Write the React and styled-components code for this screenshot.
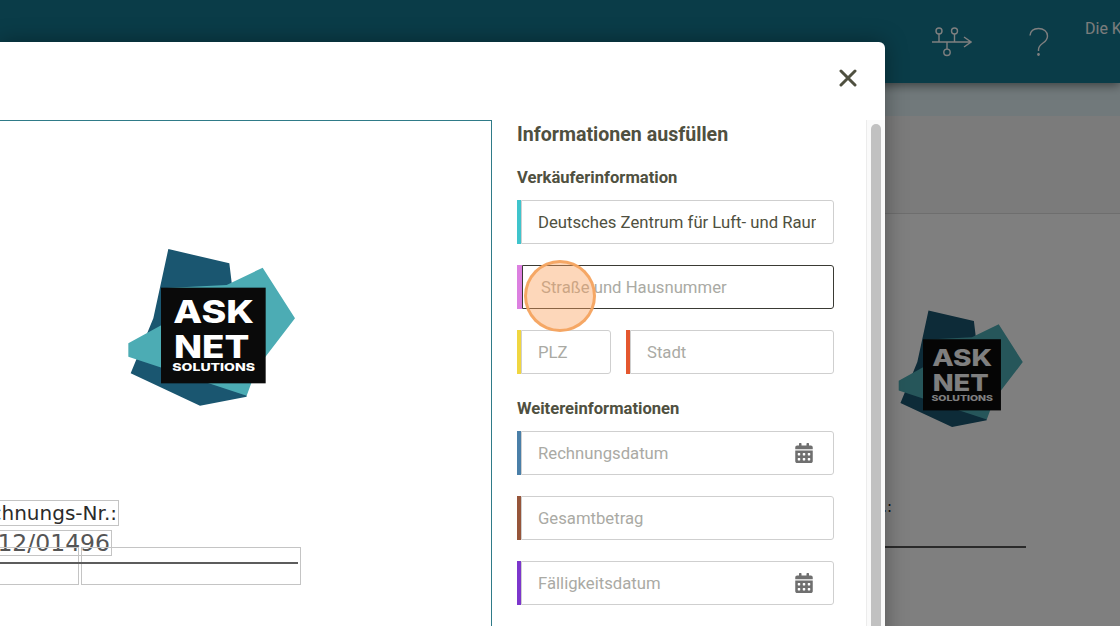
import React from "react";
import styled, { createGlobalStyle } from "styled-components";
import { FaCalendarAlt } from "react-icons/fa";

const GlobalStyle = createGlobalStyle`
  html, body {
    margin: 0;
    padding: 0;
    height: 100%;
    overflow: hidden;
    font-family: Roboto, "Liberation Sans", sans-serif;
  }
  * {
    box-sizing: border-box;
  }
`;

const Screen = styled.div`
  position: relative;
  width: 1120px;
  height: 626px;
  overflow: hidden;
  background: #fff;
`;

const Header = styled.header`
  position: relative;
  height: 83px;
  display: flex;
  justify-content: flex-end;
  background: #147890;
  box-shadow: 0 2px 10px rgba(0, 0, 0, 0.5);
  color: #fff;
`;

const WorkflowIcon = styled.svg`
  width: 40px;
  height: 32px;
  margin-top: 26px;
  margin-right: 57px;
`;

const HelpIcon = styled.svg`
  width: 20px;
  height: 30px;
  margin-top: 27px;
  margin-right: 36px;
`;

const UserName = styled.div`
  width: 35px;
  padding-top: 20px;
  overflow: hidden;
  white-space: nowrap;
  font-size: 16px;
  line-height: 18px;
  font-weight: 400;
  color: #f6f8f8;
`;

const SubBar = styled.div`
  height: 33px;
  background: #e2f2f6;
`;

const Toolbar = styled.div`
  height: 98px;
  background: #f6f6f6;
  border-bottom: 1px solid #dcdcdc;
`;

const PageBody = styled.div`
  padding-top: 86px;
`;

const PageLogo = styled.div`
  margin-left: 885px;
  width: 149px;
  height: 134px;
`;

const PageLabel = styled.div`
  width: 892px;
  margin-top: 64px;
  display: flex;
  justify-content: flex-end;
  white-space: nowrap;
  font-family: "DejaVu Sans", sans-serif;
  font-size: 15px;
  line-height: 18px;
  color: #222;
`;

const PageRule = styled.div`
  width: 1026px;
  height: 2px;
  margin-top: 30px;
  background: #555;
`;

const Backdrop = styled.div`
  position: absolute;
  inset: 0;
  background: rgba(0, 0, 0, 0.5);
`;

const Modal = styled.div`
  position: absolute;
  left: 0;
  top: 42px;
  width: 885px;
  height: 620px;
  display: flex;
  flex-direction: column;
  overflow: hidden;
  background: #fff;
  border-radius: 0 6px 0 0;
  box-shadow: 0 0 22px rgba(0, 0, 0, 0.35);
`;

const ModalTop = styled.div`
  height: 78px;
  flex-shrink: 0;
  display: flex;
  justify-content: flex-end;
  padding: 27px 28px 0 0;
`;

const CloseButton = styled.button`
  width: 18px;
  height: 18px;
  padding: 0;
  border: 0;
  background: none;
  color: #4f5040;
`;

const ModalBody = styled.div`
  flex: 1;
  display: flex;
  min-height: 0;
`;

const DocPanel = styled.div`
  width: 492px;
  flex-shrink: 0;
  overflow: hidden;
  border-top: 1px solid #2f7b88;
  border-right: 1px solid #2f7b88;
`;

const DocLogo = styled.div`
  width: 200px;
  height: 180px;
  margin: 114px 0 0 110px;
`;

const DocField = styled.div`
  width: ${(p) => p.$right}px;
  margin-top: ${(p) => p.$top}px;
  display: flex;
  justify-content: flex-end;
`;

const DocValue = styled.span`
  flex-shrink: 0;
  padding: 0 1px 0 0;
  border: 1px solid #c4c4c4;
  white-space: nowrap;
  font-family: "DejaVu Sans", sans-serif;
  font-size: ${(p) => p.$size}px;
  line-height: 24px;
  color: ${(p) => p.$color};
`;

const DocTable = styled.div`
  position: relative;
  width: 301px;
  height: 38px;
  margin-top: -9px;
  display: grid;
  grid-template-columns: 79px 1fr;
  gap: 2px;
`;

const DocCell = styled.div`
  border: 1px solid #c4c4c4;
  border-left-width: ${(p) => (p.$open ? 0 : 1)}px;
`;

const DocLine = styled.div`
  position: absolute;
  left: 0;
  top: 15px;
  width: 298px;
  height: 2px;
  background: #5c5c5c;
`;

const FormPanel = styled.div`
  flex: 1;
  min-width: 0;
  padding: 3px 32px 0 25px;
`;

const FormTitle = styled.h2`
  margin: 0;
  font-size: 19.6px;
  line-height: 23px;
  font-weight: 700;
  color: #4f5040;
`;

const SectionTitle = styled.h3`
  margin: ${(p) => p.$top}px 0 12px;
  font-size: 16.6px;
  line-height: 20px;
  font-weight: 700;
  color: #4f5040;
`;

const FieldStack = styled.div`
  display: flex;
  flex-direction: column;
  gap: 21px;
`;

const FieldRow = styled.div`
  display: flex;
  gap: 15px;
`;

const Field = styled.div`
  position: relative;
  width: ${(p) => (p.$width ? `${p.$width}px` : "100%")};
  flex-shrink: ${(p) => (p.$width ? 0 : 1)};
  height: 44px;
  display: flex;
  min-width: 0;
`;

const ColorBar = styled.div`
  width: ${(p) => (p.$active ? 5 : 3.5)}px;
  flex-shrink: 0;
  background: ${(p) => p.$color};
`;

const Input = styled.input`
  flex: 1;
  min-width: 0;
  height: 100%;
  padding: 0 17px 0 ${(p) => (p.$active ? 18 : 16.5)}px;
  border: ${(p) => (p.$active ? "1px solid #3a3a34" : "1.5px solid #cfcfcf")};
  border-left-width: 1px;
  border-radius: 0 3px 3px 0;
  outline: none;
  background: #fff;
  font-family: Roboto, sans-serif;
  font-size: 16.7px;
  color: #4f5040;

  &::placeholder {
    color: #aaaaa4;
    opacity: 1;
  }
`;

const FieldIcon = styled.span`
  position: absolute;
  right: 20px;
  top: 12px;
  display: flex;
  font-size: 20px;
  color: #6f6f6f;
`;

const ScrollTrack = styled.div`
  width: 19px;
  flex-shrink: 0;
  padding: 4px 4px 0 4px;
  border-left: 1px solid #ececec;
  background: #fafafa;
`;

const ScrollThumb = styled.div`
  height: 100%;
  border-radius: 5px;
  background: #c1c1c1;
`;

const ClickMarker = styled.div`
  position: absolute;
  left: 524px;
  top: 260px;
  width: 72px;
  height: 72px;
  border: 3px solid rgba(244, 164, 96, 0.95);
  border-radius: 50%;
  background: rgba(250, 160, 90, 0.42);
`;

const Logo = () => (
  <svg viewBox="0 0 600 540" width="100%" height="100%">
    <polygon
      points="175,42 358,85 372,200 410,485 270,512 62,415 130,250"
      fill="#1a5670"
    />
    <polygon
      points="458,98 555,250 440,400 410,482 55,365 55,325 155,270 155,160 350,150"
      fill="#4cacb4"
    />
    <rect x="153" y="158" width="314" height="287" fill="#0a0a0a" />
    <g fill="#fff" fontFamily="Inter, 'Liberation Sans', sans-serif" fontWeight="800">
      <text x="190" y="265" fontSize="94" textLength="242" lengthAdjust="spacingAndGlyphs">
        ASK
      </text>
      <text x="192" y="368" fontSize="94" textLength="226" lengthAdjust="spacingAndGlyphs">
        NET
      </text>
      <text x="187" y="408" fontSize="31" textLength="248" lengthAdjust="spacingAndGlyphs">
        SOLUTIONS
      </text>
    </g>
  </svg>
);

const Workflow = () => (
  <WorkflowIcon viewBox="0 0 40 32" fill="none" stroke="currentColor" strokeWidth="1.4">
    <path d="M0 16H39M32 11l7 5-7 5" />
    <circle cx="7" cy="5" r="3" />
    <circle cx="22.5" cy="5" r="3" />
    <circle cx="15" cy="26.3" r="3.2" />
    <path d="M7 8v8M22.5 8v8M15 16v7" />
  </WorkflowIcon>
);

const Help = () => (
  <HelpIcon viewBox="0 0 20 30" fill="none" stroke="currentColor" strokeWidth="1.4">
    <path d="M1 8.500C1.500 4 5 1.500 9.500 1.500c5 0 9 3 9 7.500 0 3.500-2 5.300-4.500 7-2.500 1.700-4.500 3.500-4.500 6.500v1.500" />
    <circle cx="9.500" cy="27.500" r="0.700" fill="currentColor" />
  </HelpIcon>
);

const App = () => (
  <Screen>
    <GlobalStyle />
    <Header>
      <Workflow />
      <Help />
      <UserName>Die Kunden</UserName>
    </Header>
    <SubBar />
    <Toolbar />
    <PageBody>
      <PageLogo>
        <Logo />
      </PageLogo>
      <PageLabel>Rechnungs-Nr.:</PageLabel>
      <PageRule />
    </PageBody>
    <Backdrop />

    <Modal>
      <ModalTop>
        <CloseButton aria-label="Schließen">
          <svg viewBox="0 0 18 18" width="18" height="18" fill="none" stroke="currentColor" strokeWidth="3" strokeLinecap="round">
            <path d="M2 2l14 14M16 2L2 16" />
          </svg>
        </CloseButton>
      </ModalTop>
      <ModalBody>
        <DocPanel>
          <DocLogo>
            <Logo />
          </DocLogo>
          <DocField $right={119} $top={85}>
            <DocValue $color="#2b2b2b" $size={20}>Rechnungs-Nr.:</DocValue>
          </DocField>
          <DocField $right={112} $top={4}>
            <DocValue $color="#555" $size={23.5}>12/01496</DocValue>
          </DocField>
          <DocTable>
            <DocCell $open />
            <DocCell />
            <DocLine />
          </DocTable>
        </DocPanel>

        <FormPanel>
          <FormTitle>Informationen ausfüllen</FormTitle>
          <SectionTitle $top={22}>Verkäuferinformation</SectionTitle>
          <FieldStack>
            <Field>
              <ColorBar $color="#3fc4cc" />
              <Input readOnly value="Deutsches Zentrum für Luft- und Raumfahrt" />
            </Field>
            <Field>
              <ColorBar $color="#dc80e0" $active />
              <Input $active placeholder="Straße und Hausnummer" />
            </Field>
            <FieldRow>
              <Field $width={94}>
                <ColorBar $color="#f0d640" />
                <Input placeholder="PLZ" />
              </Field>
              <Field>
                <ColorBar $color="#e4572e" />
                <Input placeholder="Stadt" />
              </Field>
            </FieldRow>
          </FieldStack>
          <SectionTitle $top={25}>Weitereinformationen</SectionTitle>
          <FieldStack>
            <Field>
              <ColorBar $color="#4a7fa8" />
              <Input placeholder="Rechnungsdatum" />
              <FieldIcon>
                <FaCalendarAlt />
              </FieldIcon>
            </Field>
            <Field>
              <ColorBar $color="#96553a" />
              <Input placeholder="Gesamtbetrag" />
            </Field>
            <Field>
              <ColorBar $color="#7c36cc" />
              <Input placeholder="Fälligkeitsdatum" />
              <FieldIcon>
                <FaCalendarAlt />
              </FieldIcon>
            </Field>
          </FieldStack>
        </FormPanel>
        <ScrollTrack>
          <ScrollThumb />
        </ScrollTrack>
      </ModalBody>
    </Modal>
    <ClickMarker />
  </Screen>
);

export default App;
